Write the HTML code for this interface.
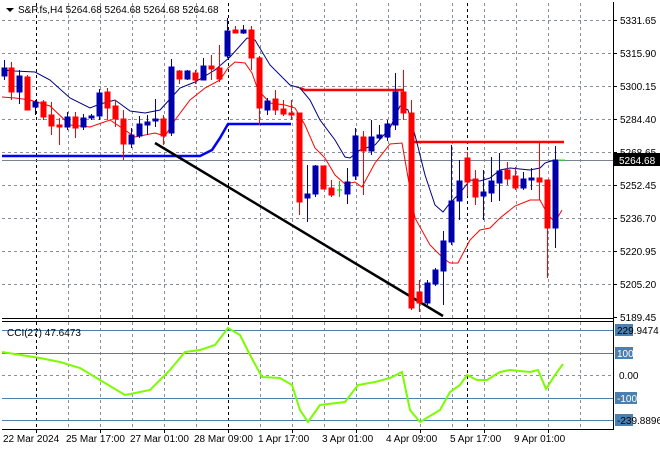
<!DOCTYPE html>
<html><head><style>
body{margin:0;background:#fff;width:660px;height:450px;overflow:hidden}
svg{display:block;font-family:"Liberation Sans",sans-serif;font-size:10px}
</style></head><body>
<svg width="660" height="450" viewBox="0 0 660 450" xmlns="http://www.w3.org/2000/svg">
<rect width="660" height="450" fill="#fff"/>
<g stroke="#8a8f99" stroke-width="1" stroke-dasharray="3,3" fill="none">
<path d="M2 20.5H613M2 53.5H613M2 86.5H613M2 119.5H613M2 152.5H613M2 185.5H613M2 218.5H613M2 251.5H613M2 284.5H613"/>
<path d="M68.5 3V318M100.5 3V318M132.5 3V318M164.5 3V318M196.5 3V318M260.5 3V318M292.5 3V318M324.5 3V318M356.5 3V318M388.5 3V318M420.5 3V318M452.5 3V318M484.5 3V318M516.5 3V318M548.5 3V318M580.5 3V318"/>
<path d="M68.5 322V429M100.5 322V429M132.5 322V429M164.5 322V429M196.5 322V429M260.5 322V429M292.5 322V429M324.5 322V429M356.5 322V429M388.5 322V429M420.5 322V429M452.5 322V429M484.5 322V429M516.5 322V429M548.5 322V429M580.5 322V429"/>
<path d="M2 375.5H613"/>
</g>
<g stroke="#000" stroke-dasharray="3,3">
<path d="M36.5 3V318M228.5 3V318M467.5 3V318M36.5 322V429M228.5 322V429M467.5 322V429"/>
</g>
<path d="M2 160.5H613" stroke="#7a8290"/>
<!-- thick blue step -->
<polyline points="2,156 200,156 212,150 220,138 228,124 291,124" fill="none" stroke="#0000ff" stroke-width="2.5"/>
<!-- red horizontal levels -->
<polyline points="300,88 305,90 403,90" fill="none" stroke="#ff0000" stroke-width="2.5"/>
<line x1="413" y1="142" x2="564" y2="142" stroke="#ff0000" stroke-width="2.5"/>
<!-- trend line -->
<line x1="155" y1="143" x2="443" y2="316" stroke="#000" stroke-width="2.5"/>
<!-- MAs -->
<polyline fill="none" stroke="#000080" stroke-width="1" points="2,70 15,71 35,72 50,80 70,98 90,108 100,104 115,100 130,111 145,113 160,110 170,99 180,88 195,82 215,70 230,57 247,38 255,40 270,65 290,85 300,88 310,100 320,120 335,140 345,157 350,158 360,150 375,145 390,128 400,106 408,110 415,135 425,175 435,205 443,212 450,203 460,193 470,180 480,181 490,178 500,170 510,168 520,169 530,170 540,168 545,163 548,162 555,160"/>
<polyline fill="none" stroke="#ff0000" stroke-width="1" points="2,97 15,98 30,100 50,106 70,125 90,127 110,120 122,128 135,137 155,133 165,136 175,120 190,100 205,88 220,80 228,68 235,62 245,63 252,73 258,90 270,103 285,105 295,108 305,125 315,148 325,158 335,175 345,184 355,182 362,187 375,163 390,144 402,143 405,160 415,218 430,245 443,258 450,263 458,263 470,240 480,230 490,228 500,218 515,206 530,200 540,200 548,215 555,222 562,210"/>
<!-- candles -->
<g stroke-width="1">
<g stroke="#0000aa" fill="#0000aa">
<path d="M4.5 60V80M19.5 70V104M35.5 100V115M67.5 112V130M83.5 114V130M91.5 114V120M99.5 89V120M131.5 128V148M139.5 116V138M147.5 115V135M155.5 99V127M171.5 59V136M187.5 70V80M203.5 58V80M227.5 18V58M243.5 25V34M267.5 98V115M307.5 165V222M315.5 165V197M347.5 168V204M355.5 128V180M371.5 120V155M379.5 125V140M387.5 120V141M395.5 73V130M427.5 280V305M435.5 268V286M443.5 231V305M451.5 145V245M459.5 160V220M483.5 170V220M491.5 157V202M499.5 153V201M523.5 172V190M531.5 168V190M555.5 146V248"/>
<rect x="2" y="68" width="5" height="8"/><rect x="17" y="76" width="5" height="16"/><rect x="33" y="102" width="5" height="5"/><rect x="65" y="117" width="5" height="10"/><rect x="81" y="118" width="5" height="9"/><rect x="89" y="116" width="5" height="2"/><rect x="97" y="93" width="5" height="23"/><rect x="129" y="135" width="5" height="9"/><rect x="137" y="124" width="5" height="12"/><rect x="145" y="122" width="5" height="3"/><rect x="153" y="119" width="5" height="2"/><rect x="169" y="67" width="5" height="66"/><rect x="185" y="71" width="5" height="8"/><rect x="201" y="66" width="5" height="14"/><rect x="225" y="31" width="5" height="25"/><rect x="241" y="30" width="5" height="3"/><rect x="265" y="101" width="5" height="9"/><rect x="305" y="194" width="5" height="4"/><rect x="313" y="166" width="5" height="28"/><rect x="345" y="182" width="5" height="12"/><rect x="353" y="136" width="5" height="40"/><rect x="369" y="137" width="5" height="14"/><rect x="377" y="135" width="5" height="3"/><rect x="385" y="124" width="5" height="13"/><rect x="393" y="92" width="5" height="33"/><rect x="425" y="283" width="5" height="20"/><rect x="433" y="270" width="5" height="14"/><rect x="441" y="241" width="5" height="30"/><rect x="449" y="201" width="5" height="41"/><rect x="457" y="181" width="5" height="20"/><rect x="481" y="192" width="5" height="4"/><rect x="489" y="181" width="5" height="12"/><rect x="497" y="171" width="5" height="12"/><rect x="521" y="179" width="5" height="9"/><rect x="529" y="178" width="5" height="2"/><rect x="553" y="160" width="5" height="68"/>
</g>
<g stroke="#ff0000" fill="#ff0000">
<path d="M11.5 62V100M27.5 75V110M43.5 100V120M51.5 102V135M59.5 118V145M75.5 112V138M107.5 88V120M115.5 100V127M123.5 110V160M163.5 115V145M179.5 70V84M195.5 70V84M211.5 55V80M219.5 45V82M235.5 26V33M251.5 26V70M259.5 56V125M275.5 90V115M283.5 100V116M291.5 100V120M299.5 113V215M323.5 166V189M331.5 180V197M363.5 131V195M403.5 70V120M411.5 100V310M419.5 280V312M467.5 152V196M475.5 170V205M507.5 162V185M515.5 167V190M539.5 142V200M547.5 180V278"/>
<rect x="9" y="68" width="5" height="24"/><rect x="25" y="77" width="5" height="33"/><rect x="41" y="102" width="5" height="15"/><rect x="49" y="115" width="5" height="11"/><rect x="57" y="125" width="5" height="2"/><rect x="73" y="117" width="5" height="11"/><rect x="105" y="92" width="5" height="16"/><rect x="113" y="106" width="5" height="13"/><rect x="121" y="119" width="5" height="25"/><rect x="161" y="119" width="5" height="17"/><rect x="177" y="71" width="5" height="8"/><rect x="193" y="73" width="5" height="7"/><rect x="209" y="66" width="5" height="3"/><rect x="217" y="68" width="5" height="11"/><rect x="233" y="30" width="5" height="3"/><rect x="249" y="30" width="5" height="28"/><rect x="257" y="58" width="5" height="50"/><rect x="273" y="99" width="5" height="11"/><rect x="281" y="109" width="5" height="5"/><rect x="289" y="113" width="5" height="2"/><rect x="297" y="113" width="5" height="89"/><rect x="321" y="166" width="5" height="23"/><rect x="329" y="188" width="5" height="7"/><rect x="361" y="137" width="5" height="14"/><rect x="401" y="92" width="5" height="21"/><rect x="409" y="113" width="5" height="195"/><rect x="417" y="292" width="5" height="11"/><rect x="465" y="158" width="5" height="24"/><rect x="473" y="179" width="5" height="18"/><rect x="505" y="170" width="5" height="9"/><rect x="513" y="176" width="5" height="12"/><rect x="537" y="178" width="5" height="4"/><rect x="545" y="180" width="5" height="48"/>
</g>
<path d="M339.5 181V197M337 190H342" stroke="#00cc00"/>
<path d="M558 160H565" stroke="#00ff00"/>
</g>
<!-- CCI subwindow -->
<g stroke="#4a7fb0" stroke-width="1">
<path d="M2 330.5H613M2 353.5H613M2 398.5H613M2 420.5H613"/>
</g>
<polyline fill="none" stroke="#7cfc00" stroke-width="2" points="2,352 40,358 60,362 80,368 100,380 125,395 150,390 170,370 185,352 200,350 215,345 228,328 240,335 250,355 262,377 280,378 292,385 300,410 308,422 320,405 345,402 358,385 375,382 390,378 402,372 410,410 420,422 440,410 450,392 460,385 467,375 477,380 487,380 500,372 510,370 530,372 538,370 546,389 555,375 563,364"/>
<!-- frames -->
<g fill="none" stroke="#000" stroke-width="1">
<path d="M613.5 2V430M2 318.5H613M2 321.5H613M2 429.5H613"/>
</g>
<!-- axis labels -->
<g fill="#000">
<path d="M613 20.5h4M613 53.5h4M613 86.5h4M613 119.5h4M613 152.5h4M613 185.5h4M613 218.5h4M613 251.5h4M613 284.5h4M613 317.5h4" stroke="#000"/>
<text x="620" y="24">5331.65</text><text x="620" y="57">5315.90</text><text x="620" y="90">5300.15</text><text x="620" y="123">5284.40</text><text x="620" y="156">5268.65</text><text x="620" y="189">5252.45</text><text x="620" y="222">5236.70</text><text x="620" y="255">5220.95</text><text x="620" y="288">5205.20</text><text x="620" y="321">5189.45</text>
<rect x="614" y="153" width="46" height="13" fill="#000"/><text x="619" y="164" fill="#fff">5264.68</text>
<rect x="615" y="324" width="18" height="12" fill="#4a7fb0"/><text x="617" y="334">229.9474</text>
<rect x="615" y="347" width="18" height="12" fill="#4a7fb0"/><text x="617" y="357" fill="#fff">100</text>
<text x="619" y="379">0.00</text>
<rect x="615" y="392" width="22" height="12" fill="#4a7fb0"/><text x="617" y="402" fill="#fff">-100</text>
<rect x="615" y="414" width="18" height="12" fill="#4a7fb0"/><text x="617" y="424">-239.8896</text>
<text x="7" y="336">CCI(27) 47.6473</text>
<path d="M6 8h8l-4 4z"/>
<text x="18" y="13">S&amp;P.fs,H4  5264.68 5264.68 5264.68 5264.68</text>
<g font-size="10">
<text x="3" y="442">22 Mar 2024</text><text x="66" y="442">25 Mar 17:00</text><text x="130" y="442">27 Mar 01:00</text><text x="194" y="442">28 Mar 09:00</text><text x="258" y="442">1 Apr 17:00</text><text x="322" y="442">3 Apr 01:00</text><text x="386" y="442">4 Apr 09:00</text><text x="450" y="442">5 Apr 17:00</text><text x="514" y="442">9 Apr 01:00</text>
</g>
<path d="M36.5 430v3M100.5 430v3M164.5 430v3M228.5 430v3M292.5 430v3M356.5 430v3M420.5 430v3M484.5 430v3M548.5 430v3" stroke="#000"/>
</g>
</svg>
</body></html>
